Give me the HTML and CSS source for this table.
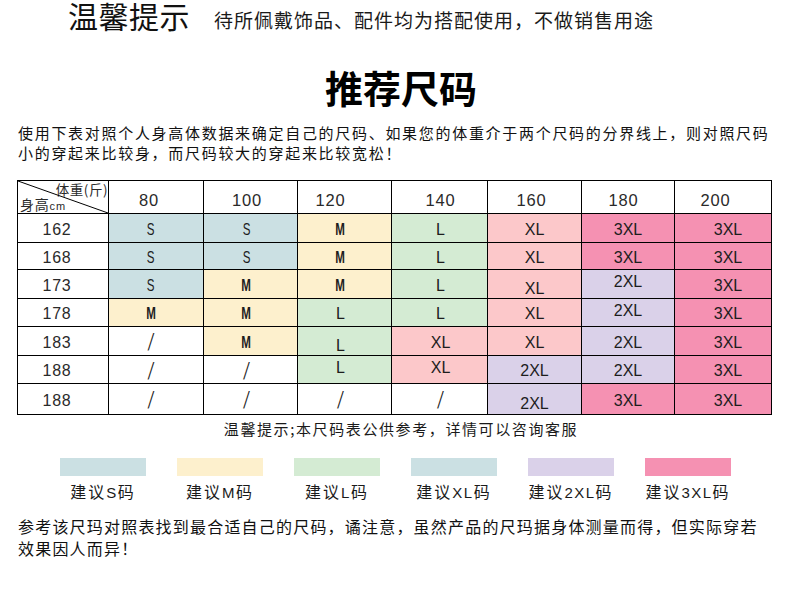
FILE: index.html
```html
<!DOCTYPE html>
<html lang="zh">
<head>
<meta charset="utf-8">
<title>推荐尺码</title>
<link rel="stylesheet" href="styles.css">
</head>
<body>
<div class="top">
  <h1 class="top-title">温馨提示</h1>
  <p class="top-note">待所佩戴饰品、配件均为搭配使用，不做销售用途</p>
</div>
<h2 class="title">推荐尺码</h2>
<p class="intro">使用下表对照个人身高体数据来确定自己的尺码、如果您的体重介于两个尺码的分界线上，则对照尺码<br>小的穿起来比较身，而尺码较大的穿起来比较宽松！</p>

<div class="grid">
  <div class="row head">
    <div class="c corner">
      <svg class="diag" viewBox="0 0 90 32" preserveAspectRatio="none"><line x1="0" y1="0" x2="90" y2="32" stroke="#000" stroke-width="1"/></svg>
      <span class="wt">体重(斤)</span>
      <span class="ht">身高<small>cm</small></span>
    </div>
    <div class="c">80</div><div class="c">100</div><div class="c">120</div><div class="c">140</div><div class="c">160</div><div class="c">180</div><div class="c">200</div>
  </div>
  <div class="row">
    <div class="c">162</div>
    <div class="c s"><span class="nar">S</span></div><div class="c s"><span class="nar">S</span></div><div class="c m"><span class="nar b">M</span></div><div class="c l">L</div><div class="c xl">XL</div><div class="c x3">3XL</div><div class="c x3">3XL</div>
  </div>
  <div class="row">
    <div class="c">168</div>
    <div class="c s"><span class="nar">S</span></div><div class="c s"><span class="nar">S</span></div><div class="c m"><span class="nar b">M</span></div><div class="c l">L</div><div class="c xl">XL</div><div class="c x3">3XL</div><div class="c x3">3XL</div>
  </div>
  <div class="row">
    <div class="c">173</div>
    <div class="c s"><span class="nar">S</span></div><div class="c m"><span class="nar b">M</span></div><div class="c m"><span class="nar b">M</span></div><div class="c l">L</div><div class="c xl dn">XL</div><div class="c x2 up">2XL</div><div class="c x3">3XL</div>
  </div>
  <div class="row">
    <div class="c">178</div>
    <div class="c m"><span class="nar b">M</span></div><div class="c m"><span class="nar b">M</span></div><div class="c l">L</div><div class="c l">L</div><div class="c xl">XL</div><div class="c x2 up">2XL</div><div class="c x3">3XL</div>
  </div>
  <div class="row">
    <div class="c">183</div>
    <div class="c sl">/</div><div class="c m"><span class="nar b">M</span></div><div class="c l dn">L</div><div class="c xl">XL</div><div class="c xl">XL</div><div class="c x2">2XL</div><div class="c x3">3XL</div>
  </div>
  <div class="row">
    <div class="c">188</div>
    <div class="c sl">/</div><div class="c sl">/</div><div class="c l up">L</div><div class="c xl up">XL</div><div class="c x2">2XL</div><div class="c x2">2XL</div><div class="c x3">3XL</div>
  </div>
  <div class="row">
    <div class="c">188</div>
    <div class="c sl">/</div><div class="c sl">/</div><div class="c sl">/</div><div class="c sl">/</div><div class="c x2 dn">2XL</div><div class="c x3">3XL</div><div class="c x3">3XL</div>
  </div>
</div>

<p class="note">温馨提示;本尺码表公供参考，详情可以咨询客服</p>

<div class="legend">
  <div class="item"><span class="sw s"></span><span class="lab">建议<span class="nl">S</span>码</span></div>
  <div class="item"><span class="sw m"></span><span class="lab">建议<span class="nl">M</span>码</span></div>
  <div class="item"><span class="sw l"></span><span class="lab">建议<span class="nl">L</span>码</span></div>
  <div class="item"><span class="sw s"></span><span class="lab">建议<span class="nl">XL</span>码</span></div>
  <div class="item"><span class="sw x2"></span><span class="lab">建议<span class="nl">2XL</span>码</span></div>
  <div class="item"><span class="sw x3"></span><span class="lab">建议<span class="nl">3XL</span>码</span></div>
</div>

<p class="foot">参考该尺玛对照表找到最合适自己的尺码，谲注意，虽然产品的尺玛据身体测量而得，但实际穿若<br>效果因人而异！</p>
</body>
</html>
```

FILE: styles.css
```css
* { box-sizing: border-box; }
body {
  margin: 0;
  background: #fff;
  color: #111;
  font-family: "Noto Sans CJK SC", "Noto Sans", sans-serif;
}
.top {
  display: flex;
  align-items: baseline;
  padding-left: 68px;
  height: 30px;
}
.top-title {
  margin: 0;
  font-size: 30px;
  line-height: 30px;
  font-weight: 400;
  letter-spacing: 0.5px;
}
.top-note {
  margin: 0 0 0 24px;
  font-size: 19px;
  line-height: 20px;
  letter-spacing: 1px;
  color: #1a1a1a;
}
.title {
  margin: 38px 0 0;
  padding-left: 12px;
  text-align: center;
  font-size: 38px;
  line-height: 38px;
  font-weight: 700;
  color: #000;
}
.intro {
  margin: 17px 0 0;
  padding-left: 18px;
  font-size: 15px;
  line-height: 20px;
  letter-spacing: 1.7px;
  white-space: nowrap;
}
.grid {
  margin: 17px 0 0 17px;
  display: grid;
  grid-template-columns: 90px 94px 93px 93px 95px 93px 92px 96px;
  grid-template-rows: 32px 28px 26px 28px 27px 28px 27px 30px;
  gap: 1px;
  padding: 1px;
  background: #000;
  width: max-content;
  font-family: "Liberation Sans", Arial, sans-serif;
  font-size: 16px;
  color: #1d1d1d;
}
.row { display: contents; }
.c {
  background: #fff;
  display: flex;
  align-items: center;
  justify-content: center;
  padding-top: 3px;
  line-height: 18px;
  white-space: nowrap;
}
.row > .c:nth-child(1) { padding-right: 12px; letter-spacing: 0.8px; color: #2a2a2a; }
.row > .c:nth-child(2) { padding-right: 10px; }
.row > .c:nth-child(3) { padding-right: 8px; }
.row > .c:nth-child(4) { padding-right: 8px; }
.row > .c:nth-child(5) { padding-left: 2px; }
.row > .c:nth-child(8) { padding-left: 10px; }
.head > .c { padding-top: 6px; font-size: 16.5px; letter-spacing: 0.8px; color: #2a2a2a; }
.head > .c:nth-child(2) { padding-right: 14px; }
.head > .c:nth-child(3) { padding-right: 7px; }
.head > .c:nth-child(4) { padding-right: 28px; }
.head > .c:nth-child(5) { padding-left: 2px; }
.head > .c:nth-child(6) { padding-right: 6px; padding-left: 0; }
.head > .c:nth-child(7) { padding-right: 9px; }
.head > .c:nth-child(8) { padding-right: 15px; padding-left: 0; }
.c.dn { padding-top: 9px; }
.c.up { padding-top: 0; padding-bottom: 4px; }

.corner {
  position: relative;
  display: flex;
  flex-direction: column;
  align-items: stretch;
  justify-content: space-between;
  padding: 1px 0 1px 2px !important;
  font-family: "Noto Sans CJK SC", sans-serif;
  color: #333;
}
.diag {
  position: absolute;
  left: 0;
  top: 0;
  width: 100%;
  height: 100%;
}
.wt {
  align-self: flex-end;
  font-size: 13.5px;
  line-height: 15px;
  letter-spacing: 0.5px;
}
.ht {
  align-self: flex-start;
  font-size: 14px;
  line-height: 15px;
}
.ht small { font-size: 11px; font-family: "Liberation Sans", sans-serif; }

.nar {
  display: inline-block;
  transform: scaleX(0.68);
  font-size: 17px;
}
.nar.b { font-weight: 700; }
.c.sl {
  font-family: "DejaVu Sans", sans-serif;
  font-size: 22px;
  font-weight: 200;
  color: #222;
  padding-top: 2px;
}

.s { background: #cbe0e3; }
.m { background: #fdf0cd; }
.l { background: #d4ebd3; }
.xl { background: #fcc8ca; }
.x2 { background: #dad1e9; }
.x3 { background: #f591b2; }

.note {
  margin: 4px 0 0;
  padding-left: 12px;
  text-align: center;
  font-size: 15px;
  line-height: 20px;
  letter-spacing: 1.6px;
  color: #1a1a1a;
}
.legend {
  margin-top: 19px;
  display: flex;
  gap: 31px;
  padding-left: 60px;
}
.item {
  width: 86px;
  display: flex;
  flex-direction: column;
  align-items: center;
}
.sw {
  display: block;
  width: 86px;
  height: 18px;
}
.lab {
  margin-top: 5px;
  font-size: 16px;
  line-height: 20px;
  letter-spacing: 2px;
  white-space: nowrap;
  color: #1a1a1a;
}
.nl { font-family: "Liberation Sans", sans-serif; font-size: 15px; letter-spacing: 1.5px; }
.foot {
  margin: 12px 0 0;
  padding-left: 18px;
  font-size: 16px;
  line-height: 22px;
  letter-spacing: 1.2px;
  white-space: nowrap;
  color: #111;
}
```
